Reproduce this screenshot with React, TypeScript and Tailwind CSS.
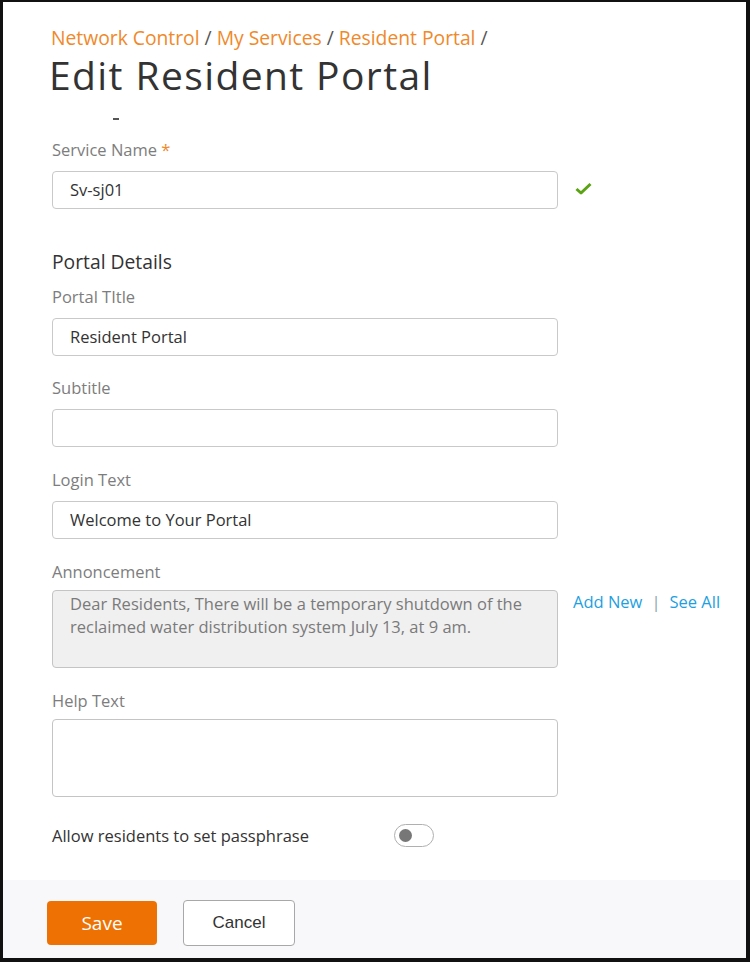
import React from "react";

const font = { fontFamily: '"Open Sans", "Liberation Sans", sans-serif' };

function Label({ children }: { children: React.ReactNode }) {
  return <div className="text-[16.5px] leading-[20px] text-[#7d7d7d]">{children}</div>;
}

function Input({ value }: { value?: string }) {
  return (
    <div className="mt-[11px] w-[506px] h-[38px] border border-[#c9c9c9] rounded-[4px] bg-white flex items-center px-[17px] text-[16.5px] text-[#333]">
      {value}
    </div>
  );
}

export default function App() {
  return (
    <div
      className="w-[750px] h-[962px] box-border border-l-[3px] border-t-[2px] border-r-[4px] border-b-[4px] border-[#111] bg-white flex flex-col"
      style={font}
    >
      <div className="pl-[49px] pt-[26px]">
        <div className="text-[19.3px] leading-[20px] text-[#f0892a] -ml-[1px]">
          Network Control <span className="text-[#555]">/</span> My Services{" "}
          <span className="text-[#555]">/</span> Resident Portal <span className="text-[#555]">/</span>
        </div>
        <div className="-ml-[3px] text-[39px] leading-[54px] tracking-[1.4px] text-[#333]">Edit Resident Portal</div>
        <div className="mt-[16px] ml-[61px] w-[6px] h-[2px] bg-[#555]" />

        <div className="mt-[20px]">
          <Label>
            Service Name <span className="text-[#f0892a]">*</span>
          </Label>
          <div className="flex items-end">
            <Input value="Sv-sj01" />
            <svg className="ml-[17px] mb-[14px]" width="17" height="13" viewBox="0 0 17 13">
              <path d="M1.5 7 L6 11 L15.5 2" fill="none" stroke="#5aa312" strokeWidth="3" strokeLinejoin="round" />
            </svg>
          </div>
        </div>

        <div className="mt-[41px] text-[19.3px] leading-[24px] text-[#333]">Portal Details</div>

        <div className="mt-[13px]">
          <Label>Portal TItle</Label>
          <Input value="Resident Portal" />
        </div>

        <div className="mt-[22px]">
          <Label>Subtitle</Label>
          <Input />
        </div>

        <div className="mt-[23px]">
          <Label>Login Text</Label>
          <Input value="Welcome to Your Portal" />
        </div>

        <div className="mt-[23px]">
          <Label>Annoncement</Label>
          <div className="flex items-start">
            <div className="mt-[8px] w-[506px] h-[78px] border border-[#c4c4c4] rounded-[4px] bg-[#f0f0f0] px-[17px] pt-[1px] text-[16.5px] leading-[23px] text-[#7a7a7a]">
              Dear Residents, There will be a temporary shutdown of the reclaimed water distribution system July 13, at
              9 am.
            </div>
            <div className="ml-[15px] mt-[10px] text-[16.5px] leading-[20px] text-[#1d9fe2] flex items-center">
              <span>Add New</span>
              <span className="mx-[9px] text-[#8aa0b0]">|</span>
              <span>See All</span>
            </div>
          </div>
        </div>

        <div className="mt-[23px]">
          <Label>Help Text</Label>
          <div className="mt-[8px] w-[506px] h-[78px] border border-[#c4c4c4] rounded-[4px] bg-white" />
        </div>

        <div className="mt-[27px] flex items-center">
          <div className="w-[342px] text-[16.5px] leading-[20px] text-[#333] pt-[1px]">
            Allow residents to set passphrase
          </div>
          <div className="w-[40px] h-[23px] rounded-full border-[1.5px] border-[#b0b0b0] bg-white flex items-center pl-[4px]">
            <div className="w-[13px] h-[13px] rounded-full bg-[#777]" />
          </div>
        </div>
      </div>

      <div className="mt-auto h-[78px] bg-[#f8f8fa] flex items-start pl-[44px] pt-[20px]">
        <button className="mt-[1px] w-[110px] h-[44px] rounded-[4px] bg-[#ee7203] text-white text-[19px]" style={font}>
          Save
        </button>
        <button
          className="ml-[26px] w-[112px] h-[46px] rounded-[4px] border-[1.5px] border-[#a8a8a8] bg-white text-[17px] text-[#333]"
          style={{ fontFamily: '"Liberation Sans", Arial, sans-serif' }}
        >
          Cancel
        </button>
      </div>
    </div>
  );
}
